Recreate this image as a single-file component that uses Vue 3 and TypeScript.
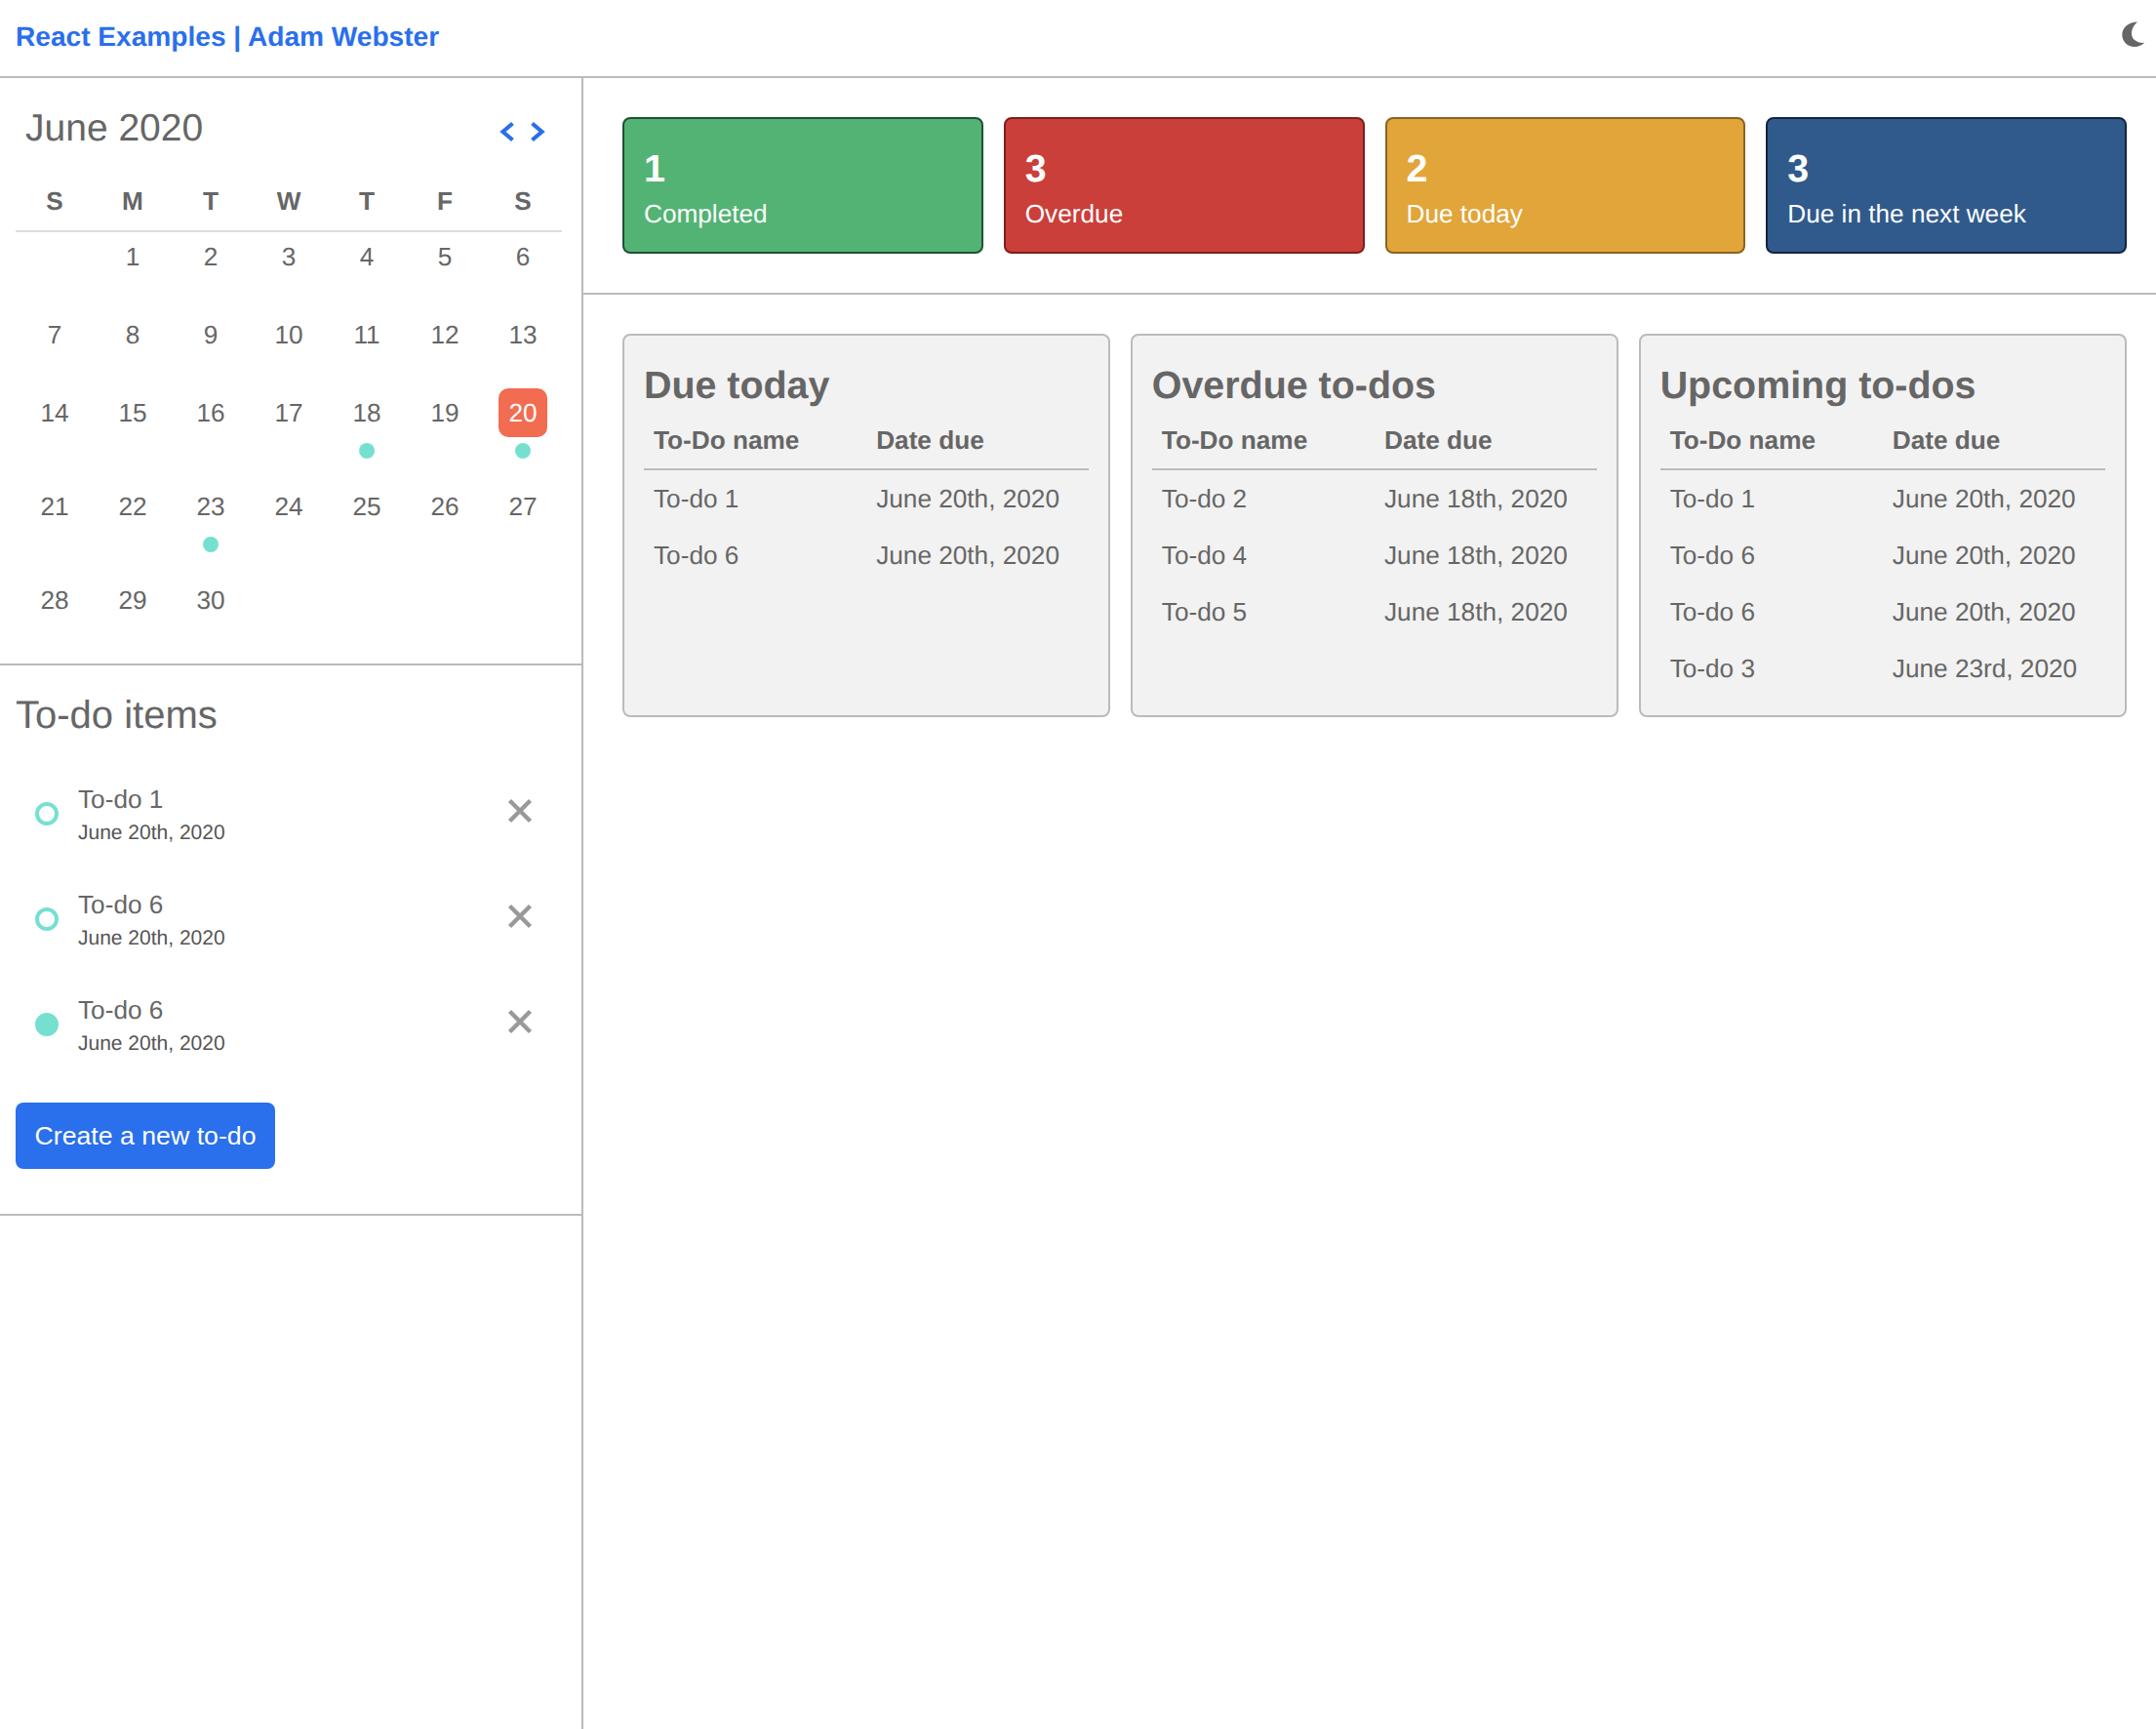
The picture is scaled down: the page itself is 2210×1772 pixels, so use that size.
<script setup lang="ts">
interface Day {
  n: number | null
  today?: boolean
  dot?: boolean
}

const weekdays = ['S', 'M', 'T', 'W', 'T', 'F', 'S']

const eventDays = [18, 20, 23]
const days: Day[] = [{ n: null }]
for (let i = 1; i <= 30; i++) {
  days.push({ n: i, today: i === 20, dot: eventDays.includes(i) })
}

const todos = [
  { name: 'To-do 1', date: 'June 20th, 2020', done: false },
  { name: 'To-do 6', date: 'June 20th, 2020', done: false },
  { name: 'To-do 6', date: 'June 20th, 2020', done: true },
]

const stats = [
  { count: 1, label: 'Completed', tone: 'green' },
  { count: 3, label: 'Overdue', tone: 'red' },
  { count: 2, label: 'Due today', tone: 'yellow' },
  { count: 3, label: 'Due in the next week', tone: 'blue' },
]

const panels = [
  {
    title: 'Due today',
    rows: [
      ['To-do 1', 'June 20th, 2020'],
      ['To-do 6', 'June 20th, 2020'],
    ],
  },
  {
    title: 'Overdue to-dos',
    rows: [
      ['To-do 2', 'June 18th, 2020'],
      ['To-do 4', 'June 18th, 2020'],
      ['To-do 5', 'June 18th, 2020'],
    ],
  },
  {
    title: 'Upcoming to-dos',
    rows: [
      ['To-do 1', 'June 20th, 2020'],
      ['To-do 6', 'June 20th, 2020'],
      ['To-do 6', 'June 20th, 2020'],
      ['To-do 3', 'June 23rd, 2020'],
    ],
  },
]
</script>

<template>
  <div class="page">
    <header class="topbar">
      <a class="brand">React Examples | Adam Webster</a>
      <svg class="moon" viewBox="0 0 26 26" width="26" height="26">
        <path d="M16 0.4C7 0.4 0.3 6 0.3 13.5C0.3 20.7 6 26 13 26C17 26 20.7 24.5 23.3 21.8C16 22.5 10 18.5 10 12.5C10 7.5 12.5 3.5 16 0.4Z" fill="#666" />
      </svg>
    </header>

    <div class="body">
      <aside class="sidebar">
        <section class="calendar">
          <div class="cal-head">
            <h2 class="month">June 2020</h2>
            <div class="cal-nav">
              <svg viewBox="0 0 16 22" width="16" height="22">
                <path d="M13.5 2.5L3.5 11L13.5 19.5" />
              </svg>
              <svg viewBox="0 0 16 22" width="16" height="22">
                <path d="M2.5 2.5L12.5 11L2.5 19.5" />
              </svg>
            </div>
          </div>
          <div class="weekdays">
            <span v-for="(w, i) in weekdays" :key="i">{{ w }}</span>
          </div>
          <div class="days">
            <div v-for="(d, i) in days" :key="i" class="day" :class="{ tall: d.dot }">
              <span v-if="d.n" class="num" :class="{ today: d.today }">{{ d.n }}</span>
              <span v-if="d.dot" class="dot"></span>
            </div>
          </div>
        </section>

        <section class="todos">
          <h2>To-do items</h2>
          <ul>
            <li v-for="(t, i) in todos" :key="i">
              <span class="check" :class="{ done: t.done }"></span>
              <div class="todo-text">
                <div class="todo-name">{{ t.name }}</div>
                <div class="todo-date">{{ t.date }}</div>
              </div>
              <svg class="remove" viewBox="0 0 26 26" width="26" height="26">
                <path d="M2.5 2.5L23.5 23.5M23.5 2.5L2.5 23.5" />
              </svg>
            </li>
          </ul>
          <button class="create">Create a new to-do</button>
        </section>
      </aside>

      <main class="main">
        <section class="stats">
          <div v-for="s in stats" :key="s.label" class="stat" :class="s.tone">
            <div class="stat-count">{{ s.count }}</div>
            <div class="stat-label">{{ s.label }}</div>
          </div>
        </section>

        <section class="panels">
          <div v-for="p in panels" :key="p.title" class="panel">
            <h3>{{ p.title }}</h3>
            <table>
              <thead>
                <tr>
                  <th>To-Do name</th>
                  <th>Date due</th>
                </tr>
              </thead>
              <tbody>
                <tr v-for="(r, i) in p.rows" :key="i">
                  <td>{{ r[0] }}</td>
                  <td>{{ r[1] }}</td>
                </tr>
              </tbody>
            </table>
          </div>
        </section>
      </main>
    </div>
  </div>
</template>

<style>
html,
body {
  margin: 0;
  background: #fff;
}
</style>

<style scoped>
.page {
  width: 2210px;
  height: 1772px;
  display: flex;
  flex-direction: column;
  font-family: 'Liberation Sans', Arial, sans-serif;
  font-size: 26.2px;
  color: #666;
  overflow: hidden;
  text-rendering: geometricPrecision;
}
.topbar {
  height: 78px;
  flex: none;
  display: flex;
  align-items: center;
  justify-content: space-between;
  padding: 0 9px 0 16px;
  border-bottom: 2px solid #bbb;
}
.brand {
  font-size: 28.1px;
  font-weight: 700;
  color: #2a6fec;
  padding-bottom: 2px;
}
.moon {
  margin-bottom: 8px;
}
.body {
  flex: 1;
  display: flex;
  min-height: 0;
}
.sidebar {
  width: 596px;
  flex: none;
  border-right: 2px solid #bbb;
}
.calendar {
  border-bottom: 2px solid #bbb;
  padding: 0 20px 10px 16px;
}
.cal-head {
  height: 102px;
  display: flex;
  align-items: center;
  justify-content: space-between;
  padding: 0 17px 0 10px;
}
h2 {
  margin: 0;
  font-size: 39px;
  font-weight: 400;
  line-height: 44px;
}
.month {
  margin-top: 2px;
}
.cal-nav {
  display: flex;
  gap: 15px;
  margin-top: 8px;
}
.cal-nav path {
  fill: none;
  stroke: #2a6fec;
  stroke-width: 4.2;
}
.weekdays {
  display: grid;
  grid-template-columns: repeat(7, 80px);
  height: 54px;
  line-height: 48px;
  text-align: center;
  font-weight: 700;
  border-bottom: 2px solid #ddd;
}
.days {
  display: grid;
  grid-template-columns: repeat(7, 80px);
}
.day {
  height: 80px;
  display: flex;
  flex-direction: column;
  align-items: center;
  text-align: center;
  line-height: 50px;
}
.day.tall {
  height: 96px;
}
.num {
  display: block;
  width: 50px;
  height: 50px;
}
.num.today {
  background: #f26c51;
  color: #fff;
  border-radius: 10px;
}
.dot {
  display: block;
  width: 16px;
  height: 16px;
  margin-top: 6px;
  border-radius: 50%;
  background: #76e0d0;
}
.todos {
  padding: 0 0 46px 16px;
  border-bottom: 2px solid #bbb;
}
.todos h2 {
  padding-top: 29px;
  font-size: 40px;
}
ul {
  list-style: none;
  margin: 26px 0 0;
  padding: 0;
}
li {
  display: flex;
  align-items: center;
  height: 108px;
}
.check {
  width: 24px;
  height: 24px;
  box-sizing: border-box;
  border: 4px solid #76e0d0;
  border-radius: 50%;
  margin: 0 20px 2px 20px;
  flex: none;
}
.check.done {
  background: #76e0d0;
}
.todo-text {
  flex: 1;
}
.todo-name {
  line-height: 32px;
}
.todo-date {
  font-size: 21px;
  line-height: 28px;
  margin-top: 5px;
  color: #555;
}
.remove {
  margin: 0 50px 8px 0;
  flex: none;
}
.remove path {
  fill: none;
  stroke: #999;
  stroke-width: 4.4;
}
.create {
  display: block;
  width: 266px;
  height: 68px;
  margin-top: 25px;
  padding: 0;
  border: none;
  border-radius: 8px;
  background: #2a6fec;
  color: #fff;
  font: inherit;
  font-size: 26.7px;
}
.main {
  flex: 1;
  min-width: 0;
}
.stats {
  display: grid;
  grid-template-columns: repeat(4, 1fr);
  gap: 21px;
  padding: 40px 30px 40px 40px;
  border-bottom: 2px solid #bbb;
  height: 140px;
}
.stat {
  border: 2px solid;
  border-radius: 8px;
  color: #fff;
  padding: 0 20px;
}
.stat-count {
  font-size: 39.4px;
  font-weight: 700;
  line-height: 44px;
  margin-top: 29px;
}
.stat-label {
  line-height: 30px;
  margin-top: 9px;
}
.green {
  background: #53b374;
  border-color: #1e5233;
}
.red {
  background: #cb3f3a;
  border-color: #7f1d1a;
}
.yellow {
  background: #e1a53a;
  border-color: #8a6321;
}
.blue {
  background: #305a8c;
  border-color: #14243f;
}
.panels {
  display: grid;
  grid-template-columns: repeat(3, 1fr);
  gap: 20.5px;
  padding: 40px 30px 0 40px;
}
.panel {
  height: 393px;
  box-sizing: border-box;
  background: #f2f2f2;
  border: 2px solid #bbb;
  border-radius: 8px;
  padding: 29px 20px 0;
}
h3 {
  margin: 0;
  font-size: 39.4px;
  font-weight: 700;
  line-height: 44px;
}
table {
  width: 100%;
  border-collapse: collapse;
  table-layout: fixed;
  margin-top: 7px;
}
th {
  text-align: left;
  font-weight: 700;
  padding: 0 10px 2px;
  height: 57px;
  box-sizing: border-box;
  border-bottom: 2px solid #bbb;
}
td {
  padding: 0 10px;
  height: 58px;
}
</style>
